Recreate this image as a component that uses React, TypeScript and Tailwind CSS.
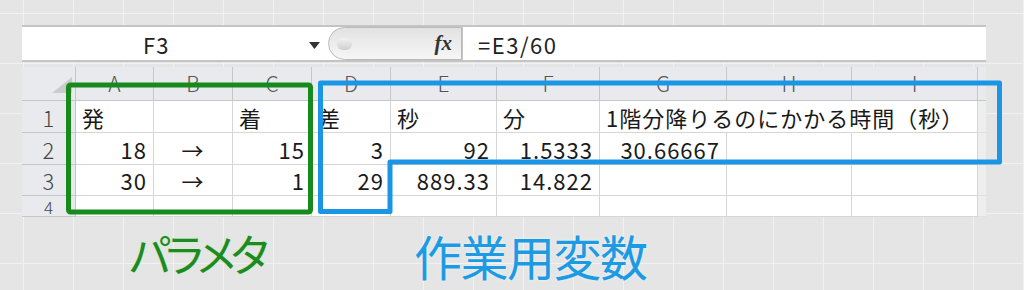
import React from 'react';

type Cell = { t?: string; a?: 'l' | 'r' | 'c'; span?: boolean };

const JP = "font-['Noto_Sans_CJK_JP','Noto_Sans',sans-serif]";

const letters = ['A', 'B', 'C', 'D', 'E', 'F', 'G', 'H', 'I'];
const colW = ['w-[78px]', 'w-[79px]', 'w-[79px]', 'w-[79px]', 'w-[106px]', 'w-[103px]', 'w-[127px]', 'w-[125px]', 'w-[126px]'];

const rows: { n: string; h: string; cells: Cell[] }[] = [
  {
    n: '1',
    h: 'h-[32px]',
    cells: [
      { t: '発' },
      {},
      { t: '着' },
      { t: '差' },
      { t: '秒' },
      { t: '分' },
      { t: '1階分降りるのにかかる時間（秒）', span: true },
    ],
  },
  {
    n: '2',
    h: 'h-[32px]',
    cells: [
      { t: '18', a: 'r' },
      { t: '→', a: 'c' },
      { t: '15', a: 'r' },
      { t: '3', a: 'r' },
      { t: '92', a: 'r' },
      { t: '1.5333', a: 'r' },
      { t: '30.66667', a: 'r' },
      {},
      {},
    ],
  },
  {
    n: '3',
    h: 'h-[31px]',
    cells: [
      { t: '30', a: 'r' },
      { t: '→', a: 'c' },
      { t: '1', a: 'r' },
      { t: '29', a: 'r' },
      { t: '889.33', a: 'r' },
      { t: '14.822', a: 'r' },
      {},
      {},
      {},
    ],
  },
  // last row is only partly in view
  { n: '4', h: 'h-[21px]', cells: [{}, {}, {}, {}, {}, {}, {}, {}, {}] },
];

const alignCls = (a?: 'l' | 'r' | 'c') =>
  a === 'r' ? 'justify-end' : a === 'c' ? 'justify-center' : 'justify-start';

function FormulaBar() {
  return (
    <div className="flex h-[37px] w-[964px] border-t-2 border-b-2 border-[#c4c4c4] bg-white">
      {/* name box */}
      <div className="relative flex w-[306px] items-center pl-[121px]">
        <span className="text-[22px] leading-none tracking-[1px] text-[#222]">F3</span>
        <svg className="absolute right-[8px] top-[15px]" width="11" height="7" viewBox="0 0 11 7">
          <polygon points="0,0 11,0 5.5,7" fill="#333" />
        </svg>
      </div>
      {/* splitter + fx */}
      <div className="relative flex w-[134px] items-center rounded-l-full border border-[#b9b9b9] bg-[linear-gradient(to_bottom,#e2e2e2,#f6f6f6)]">
        <div className="ml-[8px] h-[12px] w-[15px] rounded-full bg-[linear-gradient(to_bottom,#f2f2f2,#cfcfcf)]" />
        <span className="ml-auto mr-[9px] font-['Liberation_Serif',serif] text-[21px] font-bold italic leading-none text-[#333]">
          fx
        </span>
      </div>
      <div className="flex flex-1 items-center border-l border-[#c4c4c4] pl-[15px]">
        <span className="text-[22px] leading-none tracking-[1.5px] text-[#222]">=E3/60</span>
      </div>
    </div>
  );
}

function Sheet() {
  return (
    <div className="mt-[5px] w-[964px]">
      {/* header row */}
      <div className="flex h-[34px]">
        <div className="relative w-[54px] border-r border-b border-[#c6c6c6] bg-[#e8eaed]">
          <svg className="absolute bottom-[7px] right-[3px]" width="20" height="16" viewBox="0 0 20 16">
            <polygon points="20,0 20,16 0,16" fill="#c9cbce" />
          </svg>
        </div>
        {letters.map((l, i) => (
          <div
            key={l}
            className={`${colW[i]} flex items-center justify-center border-r border-b border-[#c6c6c6] bg-[#e8eaed] text-[21px] font-light leading-none text-[#555]`}
          >
            {l}
          </div>
        ))}
        <div className="flex-1 border-b border-[#c6c6c6] bg-[#e8eaed]" />
      </div>
      {rows.map((r) => (
        <div key={r.n} className={`flex ${r.h}`}>
          <div
            className={`flex w-[54px] justify-center border-r border-b border-[#c6c6c6] bg-[#e8eaed] font-light leading-none text-[#444] ${
              r.n === '4' ? 'items-start pt-[2px] text-[17px]' : 'items-center text-[22px]'
            }`}
          >
            {r.n}
          </div>
          {r.cells.map((c, i) => (
            <div
              key={i}
              className={`${c.span ? 'w-[378px]' : colW[i]} flex items-center whitespace-nowrap border-r border-b border-[#d6d6d6] bg-white px-[6px] text-[22px] leading-none tracking-[1px] text-[#1a1a1a] ${alignCls(c.a)}`}
            >
              {c.t}
            </div>
          ))}
          <div className="flex-1 border-b border-[#e0e0e0] bg-[#eeeeee]" />
        </div>
      ))}
    </div>
  );
}

export default function App() {
  return (
    <div
      className={`relative h-[290px] w-[1024px] overflow-hidden bg-[#e5e5e5] bg-[linear-gradient(to_right,#f1f1f1_1px,transparent_1px),linear-gradient(to_bottom,#f1f1f1_1px,transparent_1px)] bg-size-[50px_50px] bg-position-[23px_13px] ${JP}`}
    >
      <div className="pl-[22px] pt-[25px]">
        <FormulaBar />
        <Sheet />
      </div>

      <div className="mt-[14px] flex items-start">
        <span className="ml-[129px] text-[44px] leading-none tracking-[-5px] text-[#1f8a1f] [font-feature-settings:'palt'] [text-shadow:0_0_3px_#c8f0c8]">
          パラメタ
        </span>
        <span className="ml-[150px] text-[48px] leading-none tracking-[-1.5px] text-[#1e9ae2] [text-shadow:0_0_3px_#e6f6ff]">
          作業用変数
        </span>
      </div>

      {/* annotation boxes */}
      <svg className="pointer-events-none absolute left-0 top-0" width="1024" height="290" viewBox="0 0 1024 290">
        <rect x="68.5" y="85" width="242" height="127" rx="2" fill="none" stroke="#168a1c" strokeWidth="5" />
        <path
          d="M320.5 83 H999.5 V162 H390 V211.5 H320.5 Z"
          fill="none"
          stroke="#1a96e4"
          strokeWidth="5"
          strokeLinejoin="round"
        />
      </svg>
    </div>
  );
}
